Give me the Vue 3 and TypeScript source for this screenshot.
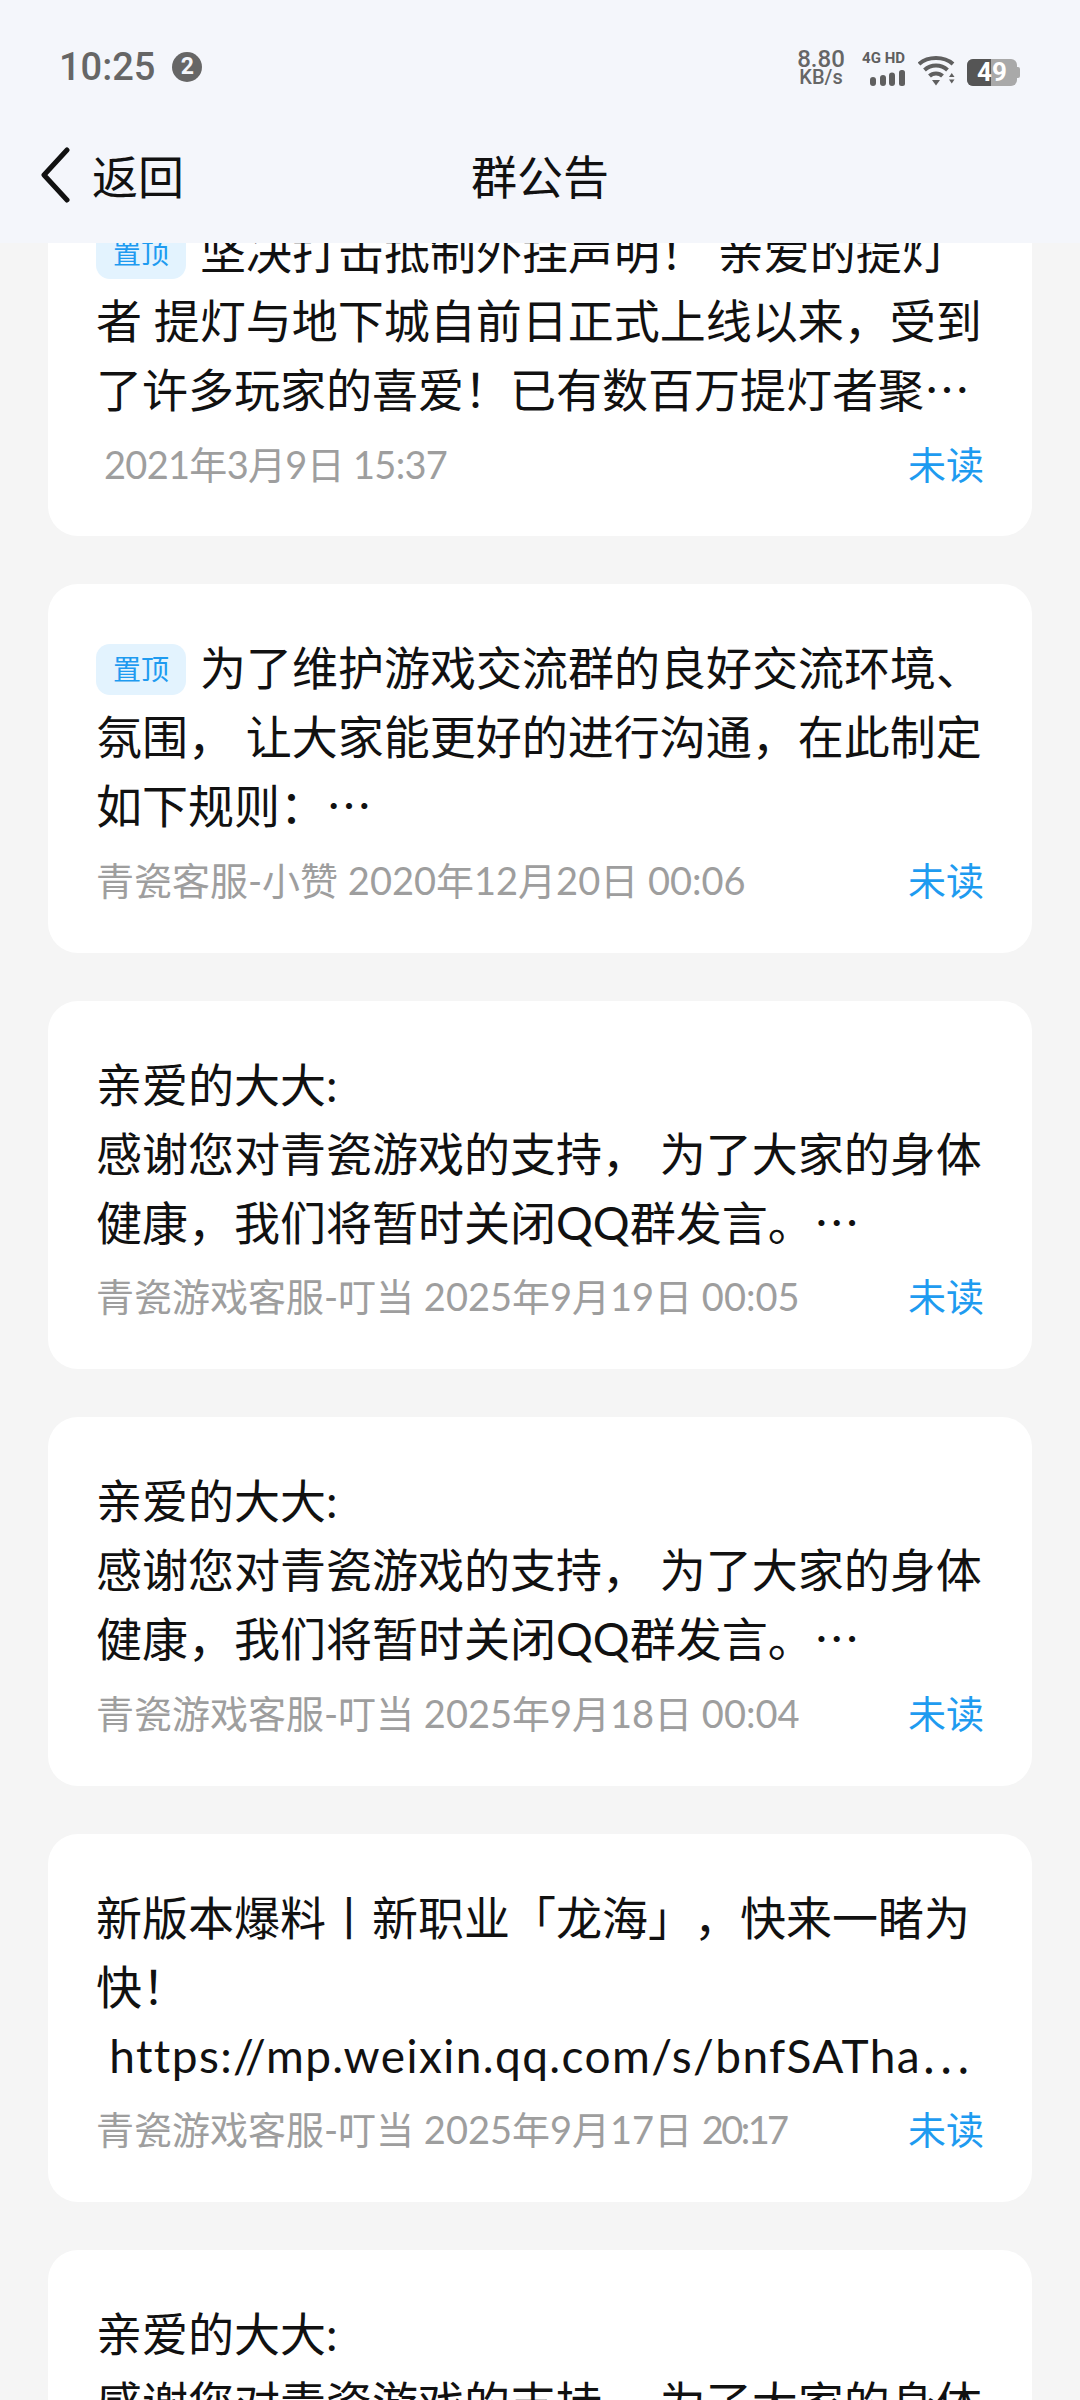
<script setup lang="ts">
interface Notice {
  pinned?: boolean;
  lines: string[];
  meta: string;
  time: string;
  indent?: boolean;
  tightDate?: boolean;
  tightTime?: boolean;
  url?: boolean;
}

const notices: Notice[] = [
  {
    pinned: true,
    lines: [
      "坚决打击抵制外挂声明！ 亲爱的提灯",
      "者 提灯与地下城自前日正式上线以来，受到",
      "了许多玩家的喜爱！已有数百万提灯者聚⋯",
    ],
    meta: "2021年3月9日",
    time: "15:37",
    indent: true,
    tightDate: true,
  },
  {
    pinned: true,
    lines: [
      "为了维护游戏交流群的良好交流环境、",
      "氛围， 让大家能更好的进行沟通，在此制定",
      "如下规则：⋯",
    ],
    meta: "青瓷客服-小赞 2020年12月20日",
    time: "00:06",
  },
  {
    lines: [
      "亲爱的大大:",
      "感谢您对青瓷游戏的支持， 为了大家的身体",
      "健康，我们将暂时关闭QQ群发言。⋯",
    ],
    meta: "青瓷游戏客服-叮当 2025年9月19日",
    time: "00:05",
  },
  {
    lines: [
      "亲爱的大大:",
      "感谢您对青瓷游戏的支持， 为了大家的身体",
      "健康，我们将暂时关闭QQ群发言。⋯",
    ],
    meta: "青瓷游戏客服-叮当 2025年9月18日",
    time: "00:04",
  },
  {
    lines: [
      "新版本爆料丨新职业「龙海」，快来一睹为",
      "快！",
      "\u00a0https://mp.weixin.qq.com/s/bnfSATha⋯",
    ],
    meta: "青瓷游戏客服-叮当 2025年9月17日",
    time: "20:17",
    tightTime: true,
    url: true,
  },
  {
    lines: [
      "亲爱的大大:",
      "感谢您对青瓷游戏的支持， 为了大家的身体",
      "健康，我们将暂时关闭QQ群发言。⋯",
    ],
    meta: "青瓷游戏客服-叮当 2025年9月16日",
    time: "00:05",
  },
];
</script>

<template>
  <div class="page">
    <header class="top">
      <div class="status">
        <div class="status-left">
          <span class="clock">10:25</span>
          <span class="count">2</span>
        </div>
        <div class="status-right">
          <div class="speed"><span>8.80</span><span>KB/s</span></div>
          <div class="signal">
            <span class="net">4G HD</span>
            <svg width="35" height="16" viewBox="0 0 35 16" fill="#5f5f5f">
              <rect x="0" y="7" width="6" height="9" rx="3" />
              <rect x="10" y="5" width="6" height="11" rx="3" />
              <rect x="19" y="2.500" width="6" height="13.500" rx="3" />
              <rect x="29" y="0" width="6" height="16" rx="2.500" />
            </svg>
          </div>
          <svg class="wifi" width="37" height="30" viewBox="0 0 37 30" fill="none" stroke="#5f5f5f" stroke-width="4">
            <path d="M1 8C10 0 26 0 35 8" />
            <path d="M6.500 14C13 8 23 8 29.500 14" />
            <path d="M11.500 20C15 16.500 21 16.500 24.500 20" />
            <path d="M14 24h8l-4 5.500z" fill="#5f5f5f" stroke="none" />
            <path d="M31 21l2.750-4 2.750 4zM31 23.500h5.500l-2.750 4z" fill="#5f5f5f" stroke="none" />
          </svg>
          <div class="battery">
            <span class="battery-fill"></span>
            <span class="battery-num">49</span>
          </div>
        </div>
      </div>
      <nav class="nav">
        <div class="back">
          <svg width="30" height="56" viewBox="0 0 30 56" fill="none" stroke="#111" stroke-width="5" stroke-linecap="round" stroke-linejoin="round">
            <path d="M26 3L3 28l23 25" />
          </svg>
          <span>返回</span>
        </div>
        <div class="title">群公告</div>
      </nav>
    </header>

    <main class="list">
      <article v-for="(item, i) in notices" :key="i" class="card">
        <p v-for="(line, j) in item.lines" :key="j" class="line" :class="{ url: item.url && j === 2 }">
          <span v-if="item.pinned && j === 0" class="pin">置顶</span>{{ line }}
        </p>
        <div class="meta" :class="{ indent: item.indent }">
          <span :class="{ tight: item.tightDate }">
            {{ item.meta }} <span :class="{ 'tight-time': item.tightTime }">{{ item.time }}</span>
          </span>
          <span class="unread">未读</span>
        </div>
      </article>
    </main>
  </div>
</template>

<style>
html,
body {
  margin: 0;
  background: #f5f5f5;
}
</style>

<style scoped>
.page {
  width: 1080px;
  height: 2400px;
  display: flex;
  flex-direction: column;
  overflow: hidden;
  background: #f5f5f5;
  font-family: Lato, "Noto Sans CJK SC", sans-serif;
  text-spacing-trim: space-all;
}

.top {
  flex: none;
  height: 243px;
  background: #f4f6fb;
  position: relative;
  z-index: 1;
}

/* status bar */
.status {
  height: 132px;
  display: flex;
  justify-content: space-between;
  align-items: flex-start;
  padding: 45px 60px 0 59px;
  box-sizing: border-box;
}

.status-left {
  display: flex;
  align-items: center;
  gap: 17px;
  height: 44px;
}

.clock {
  font-family: Roboto, sans-serif;
  font-size: 38px;
  font-weight: 500;
  color: #666;
  line-height: 44px;
}

.count {
  width: 30px;
  height: 30px;
  border-radius: 50%;
  background: #666;
  color: #f4f6fb;
  font-family: Roboto, sans-serif;
  font-size: 23px;
  font-weight: 700;
  line-height: 30px;
  text-align: center;
}

.status-right {
  display: flex;
  align-items: flex-end;
  height: 38px;
  margin-top: 3px;
}

.speed {
  display: flex;
  flex-direction: column;
  align-items: center;
  width: 50px;
  margin-right: 12px;
  font-family: Roboto, sans-serif;
  font-size: 20px;
  font-weight: 500;
  line-height: 17px;
  color: #666;
}

.speed span:first-child {
  font-size: 24px;
  line-height: 19px;
}

.signal {
  display: flex;
  flex-direction: column;
  align-items: flex-end;
  gap: 5px;
  width: 47px;
  margin-right: 13px;
}

.net {
  font-family: Roboto, sans-serif;
  font-size: 15px;
  line-height: 13px;
  font-weight: 700;
  color: #5f5f5f;
  white-space: nowrap;
}

.wifi {
  margin-right: 12px;
}

.battery {
  position: relative;
  width: 50px;
  height: 27px;
  border-radius: 6px;
  background: #a9a9a9;
  margin-right: 3px;
}

.battery::after {
  content: "";
  position: absolute;
  right: -3px;
  top: 8px;
  width: 3px;
  height: 11px;
  border-radius: 0 2px 2px 0;
  background: #a9a9a9;
}

.battery-fill {
  position: absolute;
  left: 0;
  top: 0;
  bottom: 0;
  width: 24px;
  border-radius: 6px 0 0 6px;
  background: #555;
}

.battery-num {
  position: absolute;
  inset: 0;
  color: #fff;
  font-family: Roboto, sans-serif;
  font-size: 26px;
  font-weight: 700;
  line-height: 27px;
  text-align: center;
}

/* title row */
.nav {
  position: relative;
  height: 90px;
  display: flex;
  align-items: center;
  padding-left: 41px;
  margin-top: -2px;
  font-family: "Noto Sans CJK SC", sans-serif;
}

.back {
  display: flex;
  align-items: center;
  gap: 21px;
  font-size: 46px;
  color: #111;
}

.back span {
  margin-top: -2px;
}

.title {
  position: absolute;
  left: 0;
  right: 0;
  text-align: center;
  font-size: 46px;
  color: #111;
  margin-top: -2px;
}

/* cards */
.list {
  flex: 1;
  min-height: 0;
  overflow: hidden;
  padding: 0 48px;
  display: flex;
  flex-direction: column;
  gap: 48px;
}

.card {
  flex: none;
  height: 368.4px;
  box-sizing: border-box;
  padding: 49px 48px 0 48px;
  background: #fff;
  border-radius: 30px;
}

.card:first-child {
  margin-top: -75px;
}

.line {
  margin: 0;
  height: 69px;
  font-size: 46px;
  line-height: 69px;
  color: #111;
  white-space: nowrap;
}

.line.url {
  letter-spacing: 1.4px;
}

.pin {
  display: inline-block;
  width: 90px;
  height: 51px;
  margin-right: 14px;
  border-radius: 14px;
  background: #e3f3fe;
  color: #1e9bf0;
  font-size: 28px;
  line-height: 51px;
  text-align: center;
  vertical-align: 5px;
}

.meta {
  display: flex;
  justify-content: space-between;
  align-items: center;
  height: 76px;
  font-size: 38px;
  color: #9e9e9e;
}

.meta.indent {
  padding-left: 8px;
}

.tight {
  letter-spacing: -0.7px;
}

.tight-time {
  letter-spacing: -2.6px;
}

.unread {
  color: #1e9bf0;
}
</style>
